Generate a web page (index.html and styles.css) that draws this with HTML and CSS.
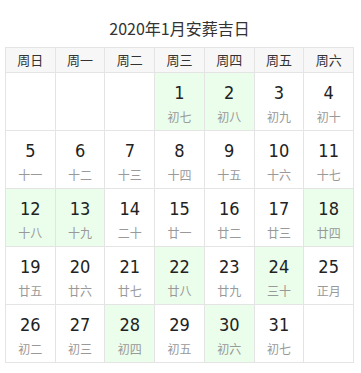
FILE: index.html
```html
<!DOCTYPE html>
<html lang="zh-CN">
<head>
<meta charset="utf-8">
<link rel="stylesheet" href="styles.css">
</head>
<body>
<div class="wrap">
  <h1 class="title">2020年1月安葬吉日</h1>
  <div class="cal">
    <div class="hd">周日</div><div class="hd">周一</div><div class="hd">周二</div><div class="hd">周三</div><div class="hd">周四</div><div class="hd">周五</div><div class="hd">周六</div>
    <div class="day"></div><div class="day"></div><div class="day"></div>
    <div class="day good"><span class="n">1</span><span class="l">初七</span></div>
    <div class="day good"><span class="n">2</span><span class="l">初八</span></div>
    <div class="day"><span class="n">3</span><span class="l">初九</span></div>
    <div class="day"><span class="n">4</span><span class="l">初十</span></div>
    <div class="day"><span class="n">5</span><span class="l">十一</span></div>
    <div class="day"><span class="n">6</span><span class="l">十二</span></div>
    <div class="day"><span class="n">7</span><span class="l">十三</span></div>
    <div class="day"><span class="n">8</span><span class="l">十四</span></div>
    <div class="day"><span class="n">9</span><span class="l">十五</span></div>
    <div class="day"><span class="n">10</span><span class="l">十六</span></div>
    <div class="day"><span class="n">11</span><span class="l">十七</span></div>
    <div class="day good"><span class="n">12</span><span class="l">十八</span></div>
    <div class="day good"><span class="n">13</span><span class="l">十九</span></div>
    <div class="day"><span class="n">14</span><span class="l">二十</span></div>
    <div class="day"><span class="n">15</span><span class="l">廿一</span></div>
    <div class="day"><span class="n">16</span><span class="l">廿二</span></div>
    <div class="day"><span class="n">17</span><span class="l">廿三</span></div>
    <div class="day good"><span class="n">18</span><span class="l">廿四</span></div>
    <div class="day"><span class="n">19</span><span class="l">廿五</span></div>
    <div class="day"><span class="n">20</span><span class="l">廿六</span></div>
    <div class="day"><span class="n">21</span><span class="l">廿七</span></div>
    <div class="day good"><span class="n">22</span><span class="l">廿八</span></div>
    <div class="day"><span class="n">23</span><span class="l">廿九</span></div>
    <div class="day good"><span class="n">24</span><span class="l">三十</span></div>
    <div class="day"><span class="n">25</span><span class="l">正月</span></div>
    <div class="day"><span class="n">26</span><span class="l">初二</span></div>
    <div class="day"><span class="n">27</span><span class="l">初三</span></div>
    <div class="day good"><span class="n">28</span><span class="l">初四</span></div>
    <div class="day"><span class="n">29</span><span class="l">初五</span></div>
    <div class="day good"><span class="n">30</span><span class="l">初六</span></div>
    <div class="day"><span class="n">31</span><span class="l">初七</span></div>
    <div class="day"></div>
  </div>
</div>
</body>
</html>
```
FILE: styles.css
```css
html, body {
  margin: 0;
  padding: 0;
  background: #fff;
}
body {
  font-family: "Noto Sans CJK SC", "Noto Sans", sans-serif;
  color: #333;
}
.wrap {
  width: 349px;
  margin-left: 5px;
}
.title {
  margin: 0;
  padding-top: 16px;
  height: 31px;
  line-height: 24px;
  font-size: 16px;
  font-weight: normal;
  text-align: center;
  color: #333;
}
.cal {
  display: grid;
  grid-template-columns: repeat(7, 1fr);
  grid-template-rows: 24px repeat(5, 57px);
  gap: 1px;
  padding: 1px;
  background: #e4e4e4;
}
.hd {
  background: #f7f7f7;
  font-size: 13px;
  line-height: 24px;
  text-align: center;
  color: #333;
}
.day {
  background: #fff;
  display: flex;
  flex-direction: column;
  align-items: center;
  padding-top: 9px;
}
.day.good {
  background: #ebfdeb;
}
.n {
  font-family: "DejaVu Sans Condensed", "DejaVu Sans", sans-serif;
  font-stretch: condensed;
  font-size: 18px;
  line-height: 22px;
  color: #222;
}
.l {
  margin-top: 5px;
  font-size: 12px;
  line-height: 16px;
  color: #999;
}
```
